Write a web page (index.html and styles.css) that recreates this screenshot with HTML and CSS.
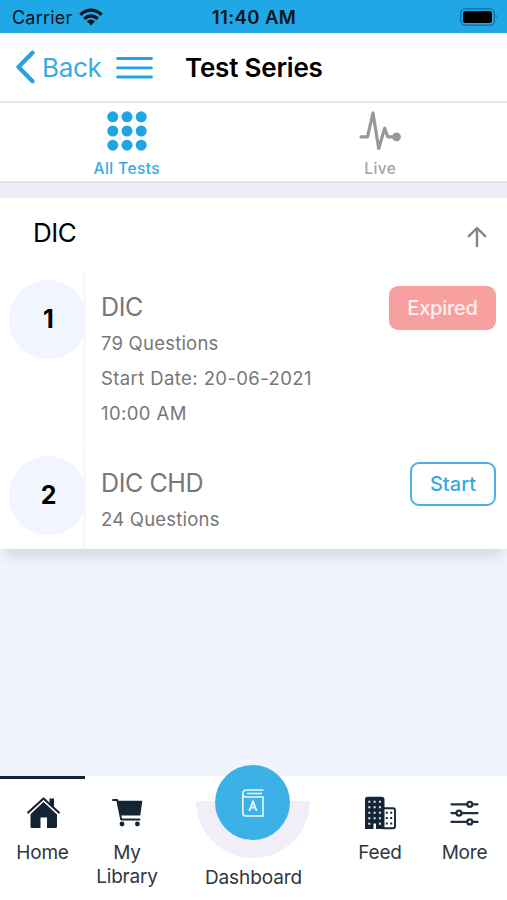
FILE: index.html
```html
<!DOCTYPE html>
<html lang="en">
<head>
<meta charset="utf-8">
<title>Test Series</title>
<link rel="stylesheet" href="styles.css">
</head>
<body>
<div class="status">
  <div class="carrier"><span>Carrier</span>
    <svg width="24" height="18" viewBox="0 0 24 18"><g fill="none" stroke="#06151e" stroke-width="3.2"><path d="M1.3 6.8Q12-2.5 22.7 6.8"/><path d="M5.2 10.8Q12 4.8 18.8 10.8"/></g><path d="M8 13.2Q12 9.8 16 13.2L12 17.5Z" fill="#06151e"/></svg>
  </div>
  <div class="clock">11:40 AM</div>
  <svg class="battery" width="39" height="18" viewBox="0 0 39 18"><rect x=".8" y=".8" width="33.6" height="16.4" rx="4.5" fill="none" stroke="#176c94" stroke-width="1.3"/><rect x="3" y="3" width="29" height="12" rx="2.5" fill="#000"/><path d="M36.5 6.5q2 2.5 0 5z" fill="#176c94"/></svg>
</div>
<header class="header">
  <svg class="chevron" width="20" height="34" viewBox="0 0 20 34"><path d="M17.5 2.8 3.5 17 17.5 31.2" fill="none" stroke="#2aa2de" stroke-width="4.3" stroke-linecap="round" stroke-linejoin="round"/></svg>
  <span class="back">Back</span>
  <svg class="burger" width="38" height="24" viewBox="0 0 38 24"><path d="M1.5 3.5H35.5M1.5 12.8H35.5M1.5 22H35.5" stroke="#20a5e2" stroke-width="2.8" stroke-linecap="round"/></svg>
  <h1>Test Series</h1>
</header>
<nav class="tabs">
  <div class="tab active">
    <svg width="40" height="40" viewBox="0 0 40 40" fill="#20a5e4"><circle cx="5.8" cy="5.8" r="5.5"/><circle cx="20" cy="5.8" r="5.5"/><circle cx="34.2" cy="5.8" r="5.5"/><circle cx="5.8" cy="20" r="5.5"/><circle cx="20" cy="20" r="5.5"/><circle cx="34.2" cy="20" r="5.5"/><circle cx="5.8" cy="34.2" r="5.5"/><circle cx="20" cy="34.2" r="5.5"/><circle cx="34.2" cy="34.2" r="5.5"/></svg>
    <span>All Tests</span>
  </div>
  <div class="tab">
    <svg width="42" height="40" viewBox="0 0 42 40"><path d="M2 25.8H8.5L14 2 19.7 37.5 25.7 17.3 28.8 25.8H36" fill="none" stroke="#989898" stroke-width="3.2" stroke-linecap="round" stroke-linejoin="round"/><circle cx="37.5" cy="25.8" r="4.4" fill="#989898"/></svg>
    <span>Live</span>
  </div>
</nav>
<main>
  <section class="card">
    <div class="card-head">
      <h2>DIC</h2>
      <svg width="20" height="22" viewBox="0 0 20 22"><path d="M10 20V2.5M1.8 10.2 10 2 18.2 10.2" fill="none" stroke="#858585" stroke-width="2.4" stroke-linecap="round" stroke-linejoin="round"/></svg>
    </div>
    <article class="row first">
      <div class="num"><b>1</b></div>
      <div class="info"><h3>DIC</h3><p class="questions">79 Questions</p><p>Start Date: 20-06-2021</p><p>10:00 AM</p></div>
      <div class="button expired">Expired</div>
    </article>
    <article class="row second">
      <div class="num"><b>2</b></div>
      <div class="info"><h3>DIC CHD</h3><p class="questions">24 Questions</p></div>
      <div class="button start">Start</div>
    </article>
  </section>
</main>
<nav class="bottom">
  <div class="item current">
    <svg width="34" height="34" viewBox="0 0 34 34" fill="#142435"><path d="M17.5 5.5 31 18V30.5Q31 32 29.5 32H21V21.5H14.5V32H6Q4.5 32 4.5 30.5V18Z"/><path d="M2 17.4 17.5 3 33 17.4" fill="none" stroke="#fff" stroke-width="4.2"/><path d="M23.5 2.5H28V12L23.5 8Z"/><path d="M2.2 16.5 17.5 2.5 32.8 16.5" fill="none" stroke="#142435" stroke-width="2.2" stroke-linecap="round" stroke-linejoin="round"/></svg>
    <span>Home</span>
  </div>
  <div class="item">
    <svg width="34" height="34" viewBox="0 0 34 34"><path d="M7.8 4.8H32.3L30.3 19.6H10.8Z" fill="#142435"/><path d="M3 4H7.2L11.2 23.5H29.5" fill="none" stroke="#142435" stroke-width="1.9" stroke-linecap="round" stroke-linejoin="round"/><circle cx="12" cy="28" r="2.4" fill="#142435"/><circle cx="27.4" cy="28" r="2.4" fill="#142435"/></svg>
    <span>My<br>Library</span>
  </div>
  <div class="item dashboard">
    <div class="bowl"></div>
    <div class="disc"><svg width="24" height="30" viewBox="0 0 24 30" fill="none" stroke="#ecfaff" stroke-width="1.6"><path d="M22.5 2H6Q1.8 2 1.8 5.7V24.7Q1.8 28 5 28H22V9H5.3Q1.8 9 1.8 5.7M21 5.5H6"/><path d="M8.3 23 12 13.5 15.7 23M9.5 19.7H14.5" stroke-width="1.8"/></svg></div>
    <span class="dash-label">Dashboard</span>
  </div>
  <div class="item">
    <svg width="34" height="34" viewBox="0 0 34 34"><rect x="18" y="12.2" width="14" height="20" rx="2" fill="#fff" stroke="#142435" stroke-width="1.9"/><path d="M2 33V3.5Q2 .8 4.8 .8H18.5Q21.5 .8 21.5 3.5V33H13V27.5H10.5V33Z" fill="#142435"/><path d="M5.3 4.8h2v2h-2zM10.6 4.8h2v2h-2zM15.9 4.8h2v2h-2zM5.3 10.2h2v2h-2zM10.6 10.2h2v2h-2zM15.9 10.2h2v2h-2zM5.3 15.7h2v2h-2zM10.6 15.7h2v2h-2zM15.9 15.7h2v2h-2zM5.3 21.2h2v2h-2zM10.6 21.2h2v2h-2zM15.9 21.2h2v2h-2zM5.3 26.7h2v2h-2zM15.9 26.7h2v2h-2z" fill="#e1e8ee"/><path d="M22.8 15.8h2v2h-2zM27.2 15.8h2v2h-2zM22.8 21h2v2h-2zM27.2 21h2v2h-2zM22.8 26.5h2v2h-2zM27.2 26.5h2v2h-2z" fill="#142435"/></svg>
    <span>Feed</span>
  </div>
  <div class="item">
    <svg width="34" height="34" viewBox="0 0 34 34" fill="#fff" stroke="#1f2d3c" stroke-width="2.3" stroke-linecap="round"><path d="M3.5 8.3H29.5M3.5 17.1H29.5M3.5 25.9H29.5"/><circle cx="21.8" cy="8.3" r="2.5"/><circle cx="11" cy="17.1" r="2.5"/><circle cx="21.8" cy="25.9" r="2.5"/></svg>
    <span>More</span>
  </div>
</nav>
</body>
</html>
```
FILE: styles.css
```css
* { box-sizing: border-box; }
body {
  margin: 0;
  height: 900px;
  overflow: hidden;
  display: flex;
  flex-direction: column;
  font-family: Inter, "Liberation Sans", sans-serif;
  color: #000;
  background: #f0f4fc;
}
svg { display: block; flex: none; }
h1, h2, h3, p { margin: 0; font-weight: 400; }
.status {
  height: 33px;
  flex: none;
  display: grid;
  grid-template-columns: 1fr auto 1fr;
  align-items: center;
  padding: 1px 8px 0 12px;
  background: #20a7e6;
  color: #06151e;
}
.carrier { display: flex; align-items: center; gap: 7px; font-size: 18px; letter-spacing: .2px; }
.clock { font-size: 18.5px; font-weight: 600; letter-spacing: .4px; margin-right: 3px; }
.battery { justify-self: end; }
.header {
  height: 70px;
  flex: none;
  display: flex;
  align-items: center;
  padding-left: 15px;
  background: #fff;
  border-bottom: 2px solid #e5e5e7;
}
.back { width: 58px; margin-left: 7px; font-size: 26px; color: #3aaae0; letter-spacing: -.3px; }
.burger { margin-left: 16px; }
h1 { margin-left: 31px; font-size: 26px; font-weight: 600; letter-spacing: -.2px; white-space: nowrap; }
.tabs {
  height: 80px;
  flex: none;
  display: grid;
  grid-template-columns: 1fr 1fr;
  background: #fff;
  border-bottom: 2px solid #e3e4e6;
}
.tab { display: flex; flex-direction: column; align-items: center; padding-top: 8px; gap: 8px; font-size: 15.5px; line-height: 20px; font-weight: 500; letter-spacing: .4px; color: #a5a5a5; }
.active { color: #35abe1; }
main { flex: 1; padding-top: 15px; background: linear-gradient(#ebeff4, #f0f4fc 60px); }
.card { height: 351px; background: #fff; box-shadow: 0 13px 13px -5px rgba(0, 0, 0, .11); }
.card-head { height: 74px; display: flex; align-items: flex-start; justify-content: space-between; padding: 19px 20px 0 33px; }
.card-head svg { margin-top: 9px; }
h2 { font-size: 26px; line-height: 32px; letter-spacing: -.5px; }
.row { display: flex; align-items: flex-start; }
.first { height: 175px; }
.second { height: 102px; }
.num { width: 86px; height: 100%; display: flex; padding: 8px 0 0 9px; background: linear-gradient(#f7f8fd, #f7f8fd) right top / 3px calc(100% - 4px) no-repeat; }
.second .num { padding-top: 9px; background-size: 3px 100%; }
.num b { flex: none; width: 79px; height: 79px; padding-bottom: 2px; border-radius: 50%; background: #f1f5fd; display: grid; place-items: center; font-size: 25px; line-height: 30px; font-weight: 700; clip-path: inset(0 4px 0 0); }
.info { flex: 1; padding: 18px 0 0 15px; color: #777; }
.second .info { padding-top: 19px; }
h3 { margin-bottom: 2px; font-size: 25px; line-height: 34px; letter-spacing: -.4px; }
p { font-size: 18.5px; line-height: 35px; letter-spacing: .4px; }
.questions { letter-spacing: .22px; }
.button { height: 44px; margin: 14px 11px 0 0; border-radius: 9px; font-size: 20px; line-height: 44px; text-align: center; }
.expired { width: 107px; background: #f8a0a0; color: #fff0f0; letter-spacing: -.25px; font-weight: 500; }
.start { width: 86px; margin-top: 15px; border: 2px solid #4bb0e2; color: #35aae1; line-height: 40px; font-weight: 500; }
.bottom { height: 124px; flex: none; display: grid; grid-template-columns: 85px 84px 169px 84px 85px; background: #fff; color: #303640; }
.item { display: flex; flex-direction: column; align-items: center; padding-top: 20px; gap: 11px; font-size: 19px; line-height: 24px; letter-spacing: -.2px; text-align: center; }
.dash-label { margin-top: 1px; letter-spacing: -.1px; }
.current { border-top: 3px solid #142435; padding-top: 17px; }
.dashboard { position: relative; padding-top: 89px; }
.bowl { position: absolute; top: 25px; left: 27px; width: 114px; height: 57px; border-radius: 0 0 57px 57px; background: #f1eef8; }
.disc { position: absolute; top: -11px; left: 46px; width: 75px; height: 75px; border-radius: 50%; background: #3bb1e7; display: grid; place-items: center; }
```
